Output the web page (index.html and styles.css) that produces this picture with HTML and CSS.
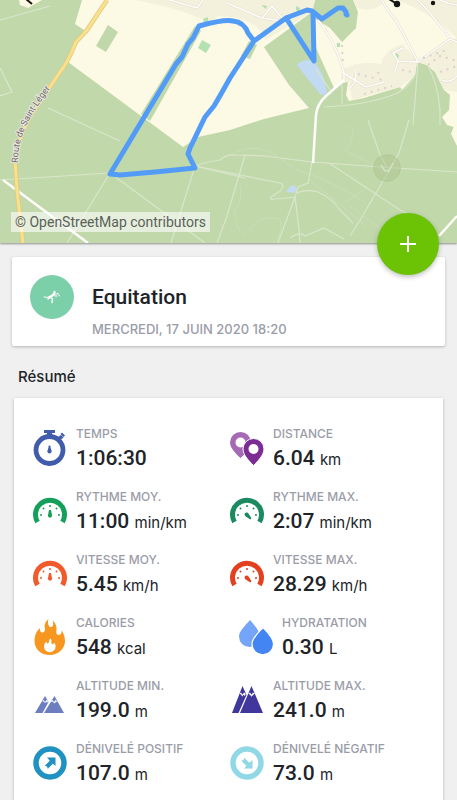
FILE: index.html
```html
<!DOCTYPE html>
<html lang="fr">
<head>
    <meta charset="UTF-8">
    <meta name="viewport" content="width=device-width, initial-scale=1.0">
    <title>Equitation</title>
    <link rel="stylesheet" href="styles.css">
</head>
<body>
    <!-- shared icons -->
    <svg class="sprite" width="0" height="0" aria-hidden="true">
        <symbol id="gauge" viewBox="0 0 36 36">
            <path fill="none" stroke="currentColor" stroke-width="5" d="M5.500 29A14.500 14.500 0 1 1 30.500 29"/>
            <g fill="currentColor">
                <circle cx="9" cy="22" r="1"/><circle cx="11.500" cy="15.500" r="1"/><circle cx="18" cy="13" r="1"/>
                <circle cx="24.500" cy="15.500" r="1"/><circle cx="27" cy="22" r="1"/>
            </g>
        </symbol>
        <symbol id="needle-up" viewBox="0 0 36 36">
            <path fill="currentColor" d="M17 17h2l.8 4.200a2.200 2.200 0 1 1-3.600 0z"/>
        </symbol>
        <symbol id="needle-side" viewBox="0 0 36 36">
            <path fill="currentColor" d="M16 20.200a2.200 2.200 0 0 1 3.500.3l3 4.700-1.200 1.200-4.900-3.200a2.200 2.200 0 0 1-.4-3z"/>
        </symbol>
        <symbol id="arrow" viewBox="0 0 36 36">
            <circle cx="18" cy="18" r="14" fill="none" stroke="currentColor" stroke-width="5.500"/>
            <path fill="currentColor" d="M15 12.500H23.500V21L20.800 18.700L15.800 23.700L15 21.500L12.800 20.700L17.800 15.700Z"/>
        </symbol>
    </svg>

    <header class="map">
        <svg class="map-view" viewBox="0 0 457 243" preserveAspectRatio="xMidYMid slice" role="img" aria-label="Parcours">
            <rect width="457" height="243" fill="#c1d8ab"/>
            <!-- fields -->
            <g fill="#fcf9e4">
                <path d="M82 0L75 24L84 30L68 62L183 147L198 137L230 130L264 119L309 108L289 85L264 47L312 12L315 0Z"/>
                <path d="M353 0L358 12L356 28L342 42L330 28L314 18L316 48L334 88L324 97L342 83L348 82L346 95L349 101L364 98L400 87L402 90L415 75L417 62L427 65L435 72L444 90L450 95L449 110L442 117L447 125L457 128V0Z"/>
                <path d="M457 118L451 134L457 146Z"/>
                <path d="M19 0L20 5L28 8L42 0Z"/>
            </g>
            <g fill="#f3f0dc">
                <path d="M135 0Q180 8 210 23L218 16Q260 18 265 40L285 28L312 12L315 0Z"/>
                <path d="M457 37L419 62L402 44Q385 50 381 64Q360 60 342 70L341 83L349 81L352 100L400 87L415 75L417 62L427 65L435 72L444 90L457 92Z"/>
                <path d="M353 0L357 8Q375 14 385 0ZM395 0Q425 8 457 38V0Z"/>
            </g>
            <g fill="#c1d8ab">
                <path d="M108 25L118 32L106 52L96 46Z"/>
                <path d="M195 26L201 31L150 121L141 114Z"/>
                <path d="M249 41L257 45L250 59L241 56Z"/>
            </g>
            <g fill="#b4e1b2">
                <path d="M202 40L211 45L206 53L198 48ZM203 19L208 17L208 22L204 23ZM263 5L267 6L266 9L262 6ZM296 6L300 8L299 12L296 10ZM337 43h3v4h-3zM396 53l3 2-1 4-3-2z"/>
            </g>
            <g fill="#c2daf2">
                <path d="M297 65Q301 60 308 60L313 61Q322 70 324 79L327 92Q325 97 320 94Q308 80 297 65Z"/>
                <path d="M286 192L290 186L295 186L297 190L294 193Z"/>
            </g>
            <!-- minor paths -->
            <g fill="none" stroke="#dae6cb" stroke-width="1.200">
                <path d="M0 180L110 173M195 166L245 178"/>
                <path d="M110 173L205 243M110 173L67 243M195 166L171 243M195 166L280 183Q286 185 280 191L271 197Q269 200 275 199L296 197"/>
                <path d="M195 166Q205 162 220 160Q227 154 235 155L265 156L312 162L381 167L457 172"/>
                <path d="M312 162L308 183L298 187L295 197L299 229L300 243M295 197L278 243M245 155L227 216L217 243"/>
                <path d="M297 193Q306 189 318 192Q332 198 340 210L353 223M329 163L400 210L430 226"/>
                <path d="M290 238Q300 231 305 236L324 228L344 239M409 120L399 153L389 171L360 220L350 236"/>
                <path d="M324 107Q360 106 390 96Q408 90 415 75M418 63L413 125M428 66Q438 84 440 110V125M342 80V104"/>
                <path d="M0 20L50 6M0 68L12 92L0 96M48 108L120 141M315 68L331 91M368 120L380 155L389 171"/>
            </g>
            <g fill="none" stroke="#cbddb9" stroke-width="1">
                <path d="M235 152Q260 142 280 158Q293 170 312 175Q330 181 365 202M345 203L363 190M240 185Q243 200 235 210Q233 225 245 236M249 230Q260 214 280 219Q284 235 273 243M347 125Q360 130 345 150L385 171M350 206L390 236M310 180L366 226"/>
            </g>
            <!-- village streets -->
            <g fill="none" stroke="#e1ddd0" stroke-width="2.600">
                <path d="M170 0L197 8L203 0M227 3L262 18L282 21M263 17L272 6L282 18M318 20Q330 35 338 55L344 72V82M342 72L366 87L384 82M350 88Q358 80 355 70M382 0Q388 12 396 20L418 62L450 39L457 42M418 62L398 61L393 53L403 48M398 61L395 72M450 38L430 13L418 0M440 0Q448 4 457 5M442 80Q450 84 457 76"/>
            </g>
            <g fill="none" stroke="#fffefa" stroke-width="1.500">
                <path d="M170 0L197 8L203 0M227 3L262 18L282 21M263 17L272 6L282 18M318 20Q330 35 338 55L344 72V82M342 72L366 87L384 82M350 88Q358 80 355 70M382 0Q388 12 396 20L418 62L450 39L457 42M418 62L398 61L393 53L403 48M398 61L395 72M450 38L430 13L418 0M440 0Q448 4 457 5M442 80Q450 84 457 76"/>
                <path stroke-width="2.500" d="M344 80L326 96Q317 104 316 115L313 163M3 180L42 209L88 243M439 236L457 216"/>
            </g>
            <g stroke="#dbd2ce" stroke-width="2" stroke-dasharray="2 5" fill="none">
                <path d="M342 45L343 66M358 74L374 78M364 94L392 86M423 58L447 50M428 65L440 56L457 61M440 72L457 66M402 70L412 72M378 72L382 84"/>
            </g>
            <!-- main road -->
            <path d="M107 0L87 30L76 42Q67 64 60 72L48 90Q18 130 15 160L17 190L23 243" fill="none" stroke="#dccb82" stroke-width="4.500"/>
            <path d="M107 0L87 30L76 42Q67 64 60 72L48 90Q18 130 15 160L17 190L23 243" fill="none" stroke="#fbe08b" stroke-width="3"/>
            <path id="road-name" d="M18 163C18 135 28 118 55 82" fill="none"/>
            <text class="road-name"><textPath href="#road-name">Route de Saint-Léger</textPath></text>
            <circle cx="387" cy="168" r="13.500" fill="#a8bd87" fill-opacity=".4" stroke="#a8bd87" stroke-opacity=".4"/>
            <path d="M381 165L385 171H389L393 163" fill="none" stroke="#d5e2c4" stroke-width="1.500"/>
            <!-- recorded track -->
            <path d="M346 14L346 12L343 8H338L322 19L312 11L307 10L286 18L254 41L248 33Q244 22 233 21Q225 19 199 26L193 38L188 44L182 57L176 64L110 174L120 175L155 172L195 168L188 154L190 148L205 117L214 106L221 94L230 78L254 41L286 18L314 61L313 12" fill="none" stroke="#529cf8" stroke-width="5" stroke-linejoin="round" stroke-linecap="round"/>
            <circle cx="347" cy="15" r="2.500" fill="#529cf8"/>
            <path d="M26 -1L32 4M389 -1L397 4" stroke="#161616" stroke-width="2"/>
            <circle cx="397" cy="4" r="3.200" fill="#161616"/>
            <circle cx="433" cy="3" r="2.200" fill="#161616"/>
        </svg>
        <a class="attribution" href="#">© OpenStreetMap contributors</a>
        <button class="add" type="button" aria-label="Ajouter">
            <svg width="18" height="18" viewBox="0 0 18 18"><path d="M9 1V17M1 9H17" stroke="#fff" stroke-width="2"/></svg>
        </button>
    </header>

    <main>
        <section class="activity">
            <span class="sport">
                <svg width="18" height="14" viewBox="0 0 18 14" fill="none" stroke="#fff" stroke-linecap="round" stroke-linejoin="round">
                    <path d="M1 7L6 7.500" stroke-width="1"/>
                    <path d="M6 7.500L11 4.500" stroke-width="2.500"/>
                    <path d="M7.500 7.500L9.500 9L9 12.500M6 8L5 9" stroke-width="1.500"/>
                    <path d="M10 3.500L13 4L15 3.500L16.500 6M12 6L14 6" stroke-width="1"/>
                    <circle cx="11.500" cy="2" r="1.200" fill="#fff" stroke="none"/>
                </svg>
            </span>
            <div>
                <h1>Equitation</h1>
                <p class="date">MERCREDI, 17 JUIN 2020 18:20</p>
            </div>
        </section>

        <h2>Résumé</h2>

        <section class="summary">
            <div class="stat">
                <svg class="icon blue" viewBox="0 0 36 36">
                    <circle cx="17.500" cy="20" r="13.500" fill="none" stroke="currentColor" stroke-width="4.800"/>
                    <path fill="currentColor" d="M12 0H23V3H20V6H15V3H12ZM26 7L29 5L31.500 7.500L29 9.500ZM28.500 4L30 2.500L33 5.500L31.500 7ZM16.800 15.500h1.400l.8 4a2.200 2.200 0 1 1-3 0z"/>
                </svg>
                <div><p class="label">TEMPS</p><p class="value">1:06:30</p></div>
            </div>
            <div class="stat">
                <svg class="icon" viewBox="0 0 36 36">
                    <path fill="#a46bb4" fill-rule="evenodd" d="M11.500 2A10.500 10.500 0 0 1 22 12.500C22 18 16 24 11.500 28C7 24 1 18 1 12.500A10.500 10.500 0 0 1 11.500 2ZM11.500 7.500A5 5 0 1 0 11.500 17.500A5 5 0 1 0 11.500 7.500Z"/>
                    <path fill="#7c2d94" stroke="#fff" stroke-width="1" d="M24.500 8.500A10.500 10.500 0 0 1 35 19C35 25 29 31 24.500 35.500C20 31 14 25 14 19A10.500 10.500 0 0 1 24.500 8.500Z"/>
                    <circle cx="24.500" cy="19" r="5" fill="#fff"/>
                </svg>
                <div><p class="label">DISTANCE</p><p class="value">6.04 <span>km</span></p></div>
            </div>
            <div class="stat">
                <svg class="icon green" viewBox="0 0 36 36"><use href="#gauge"/><use href="#needle-up"/></svg>
                <div><p class="label">RYTHME MOY.</p><p class="value">11:00 <span>min/km</span></p></div>
            </div>
            <div class="stat">
                <svg class="icon teal" viewBox="0 0 36 36"><use href="#gauge"/><use href="#needle-side"/></svg>
                <div><p class="label">RYTHME MAX.</p><p class="value">2:07 <span>min/km</span></p></div>
            </div>
            <div class="stat">
                <svg class="icon orange" viewBox="0 0 36 36"><use href="#gauge"/><use href="#needle-up"/></svg>
                <div><p class="label">VITESSE MOY.</p><p class="value">5.45 <span>km/h</span></p></div>
            </div>
            <div class="stat">
                <svg class="icon red" viewBox="0 0 36 36"><use href="#gauge"/><use href="#needle-side"/></svg>
                <div><p class="label">VITESSE MAX.</p><p class="value">28.29 <span>km/h</span></p></div>
            </div>
            <div class="stat">
                <svg class="icon" viewBox="0 0 36 36">
                    <path fill="#f7971f" d="M16.500 0C13 3 12 6 13 10C13.500 13 10 14.500 8.500 12.500C7.500 11 8 9.500 8 9C4.500 12 2.500 17 2.500 22C2.500 30 9 36 17.500 36S33 30 33 22C33 17 31 13 29.500 11.500C30 14 28.500 16 26.500 16C23.500 16 24.500 12 24.500 9C24 5 23 3.500 20.500 1.500C22 5 21 8.500 18.500 8C16 7.500 15.500 3 16.500 0Z"/>
                    <path fill="#fff" d="M18.500 19.500C16.500 21 17.500 23.500 16 24.500C14.500 24.500 14.500 23 14.500 22.500C12.500 24 12 26 12 27.500A5.800 5.800 0 0 0 23.600 27.500C23.600 26 23 24.500 22 23.500C22 25 21 25.500 20 25C18.500 24 20.500 22 18.500 19.500Z"/>
                </svg>
                <div><p class="label">CALORIES</p><p class="value">548 <span>kcal</span></p></div>
            </div>
            <div class="stat indent">
                <svg class="icon" viewBox="0 0 36 36">
                    <path fill="#74a5f8" d="M12 1C17 7 22 12 22 17.500A10.500 10.500 0 0 1 1 17.500C1 12 7 7 12 1Z"/>
                    <path fill="#4285f3" stroke="#fff" stroke-width="1.200" d="M25 8.500C30 14 35.500 19 35.500 25A10.500 10.500 0 0 1 14 25C14 19 20 14 25 8.500Z"/>
                </svg>
                <div><p class="label">HYDRATATION</p><p class="value">0.30 <span>L</span></p></div>
            </div>
            <div class="stat">
                <svg class="icon" viewBox="0 0 36 36">
                    <path fill="#6c7ebf" d="M3 31L13 14L16.500 20L10.500 31ZM12 31L22.500 14L32 31Z"/>
                    <path fill="#fff" d="M10 19.200L11.500 18L13 20L14.500 18L15.500 19L16.500 17.500L15 16L16 20.500L14 20L13 21L11.500 19.500ZM18.800 20L20.500 18L22 20L23.500 18L25.800 20L24 19.800L22.500 21.500L20.800 19.800Z"/>
                </svg>
                <div><p class="label">ALTITUDE MIN.</p><p class="value">199.0 <span>m</span></p></div>
            </div>
            <div class="stat">
                <svg class="icon" viewBox="0 0 36 36">
                    <path fill="#40379c" d="M3 31L13.500 4L17.500 13L9.500 31ZM11 31L22.500 4L34 31Z"/>
                    <path fill="#fff" d="M10.500 11.700L12 10.500L13.500 12.800L15 10.500L16.800 11.700L15.800 14L14.500 12.800L13.300 14.500L12 12.500ZM19.200 11.700L21 10.500L22.500 12.800L24 10.500L25.800 11.700L24 13L22.500 14.800L21 12.800Z"/>
                </svg>
                <div><p class="label">ALTITUDE MAX.</p><p class="value">241.0 <span>m</span></p></div>
            </div>
            <div class="stat">
                <svg class="icon azure" viewBox="0 0 36 36"><use href="#arrow"/></svg>
                <div><p class="label">DÉNIVELÉ POSITIF</p><p class="value">107.0 <span>m</span></p></div>
            </div>
            <div class="stat">
                <svg class="icon sky" viewBox="0 0 36 36"><use href="#arrow" transform="rotate(90 18 18)"/></svg>
                <div><p class="label">DÉNIVELÉ NÉGATIF</p><p class="value">73.0 <span>m</span></p></div>
            </div>
        </section>
    </main>
</body>
</html>
```
FILE: styles.css
```css
* {
    box-sizing: border-box;
}
body {
    display: flex;
    flex-direction: column;
    min-height: 100vh;
    margin: 0;
    background-color: #f0f0f0;
    color: #202428;
    font-family: Inter, sans-serif;
}
h1, h2, p {
    margin: 0;
}
.sprite {
    position: absolute;
}
.map {
    position: relative;
    height: 243px;
    box-shadow: 0 1px 2px rgba(0, 0, 0, 0.4);
}
.map-view {
    display: block;
    width: 100%;
    height: 100%;
}
.road-name {
    font: 9px Roboto, sans-serif;
    fill: #706b69;
    stroke: #e9e7df;
    stroke-width: 2px;
    paint-order: stroke;
}
.attribution {
    position: absolute;
    left: 11px;
    bottom: 11px;
    padding: 0 4px;
    background-color: rgba(255, 255, 255, 0.6);
    color: #5b615a;
    font: 14px/20px Roboto, sans-serif;
    text-decoration: none;
}
.add {
    position: absolute;
    right: 18px;
    bottom: -32px;
    display: flex;
    align-items: center;
    justify-content: center;
    width: 62px;
    height: 62px;
    padding: 0;
    border: none;
    border-radius: 50%;
    background-color: #6cc204;
    box-shadow: 0 2px 5px rgba(0, 0, 0, 0.25);
    cursor: pointer;
}
main {
    display: flex;
    flex-direction: column;
    flex: 1;
    padding: 14px 12px 0;
}
.activity {
    display: flex;
    gap: 18px;
    height: 89px;
    padding: 18px;
    border-radius: 2px;
    background-color: #fff;
    box-shadow: 0 1px 3px rgba(0, 0, 0, 0.25);
}
.sport {
    display: flex;
    align-items: center;
    justify-content: center;
    width: 44px;
    height: 44px;
    border-radius: 50%;
    background-color: #7bcfa9;
}
h1 {
    font: 500 21px/44px Roboto, sans-serif;
}
.date {
    color: #9a9ca8;
    font-size: 13px;
    font-weight: 500;
    line-height: 20px;
}
h2 {
    padding: 21px 6px;
    font-size: 15px;
    font-weight: 500;
    line-height: 20px;
}
.summary {
    flex: 1;
    display: grid;
    grid-template-columns: 1fr 1fr;
    align-content: start;
    row-gap: 15px;
    margin: -10px 2px 0;
    padding: 26px 17px 0 18px;
    background-color: #fff;
    box-shadow: 0 1px 3px rgba(0, 0, 0, 0.25);
}
.stat {
    display: flex;
    align-items: center;
    gap: 8px;
    white-space: nowrap;
}
.indent {
    padding-left: 9px;
}
.icon {
    flex: none;
    width: 36px;
    height: 36px;
}
.label {
    color: #9a9ca8;
    font-size: 12px;
    font-weight: 500;
    line-height: 20px;
}
.value {
    font: 500 21px/28px Roboto, sans-serif;
}
.value span {
    font: 15px/20px Inter, sans-serif;
}
.blue { color: #405caa; }
.green { color: #14a05a; }
.teal { color: #1b8a60; }
.orange { color: #f15a2b; }
.red { color: #e2401f; }
.azure { color: #2092c2; }
.sky { color: #91d8e7; }
```
